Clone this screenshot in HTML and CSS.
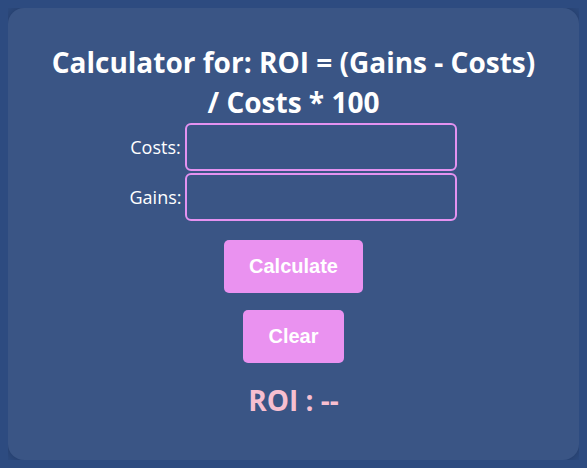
FILE: index.html
```html
<!DOCTYPE html>
<html lang="en">
<head>
    <meta charset="UTF-8">
    <meta name="viewport" content="width=device-width, initial-scale=1.0">
    <title>ROI Calculator</title>
    <link rel="stylesheet" href="styles.css">
</head>
<body>
    <div class="calculator">
        <h1>Calculator for: ROI = (Gains - Costs) / Costs * 100</h1>

        <!-- Champs de saisie -->
        <div class="field">
            <label for="costs">Costs:</label>
            <input type="text" id="costs">
        </div>
        <div class="field">
            <label for="gains">Gains:</label>
            <input type="text" id="gains">
        </div>

        <button class="btn">Calculate</button>
        <button class="btn">Clear</button>

        <p class="result">ROI : --</p>
    </div>
</body>
</html>
```

FILE: styles.css
```css
body { margin: 8px; background: #2d4b80; font-family: "Open Sans", sans-serif; color: #fff; }
.calculator { height: 452px; box-sizing: border-box; background: #3a5585; border-radius: 16px; box-shadow: 0 0 12px rgba(0, 0, 0, 0.25); padding: 34px 40px 0; display: flex; flex-direction: column; align-items: center; }
h1 { font-size: 28px; font-weight: 700; line-height: 40px; text-align: center; margin: 0 0 1px; }
.field { display: flex; align-items: center; gap: 4px; margin-bottom: 2px; }
.field label { font-size: 18px; }
.field input { width: 272px; height: 48px; box-sizing: border-box; background: transparent; border: 2px solid #e492f0; border-radius: 6px; color: #fff; }
.btn { font-family: "Liberation Sans", Arial, sans-serif; font-size: 20px; font-weight: bold; color: #fff; background: #ea92f0; border: none; border-radius: 5px; padding: 15px 25px; margin-top: 17px; cursor: pointer; }
.result { font-size: 28px; font-weight: 700; color: #f7bfd0; margin: 18px 0 0; }
```
